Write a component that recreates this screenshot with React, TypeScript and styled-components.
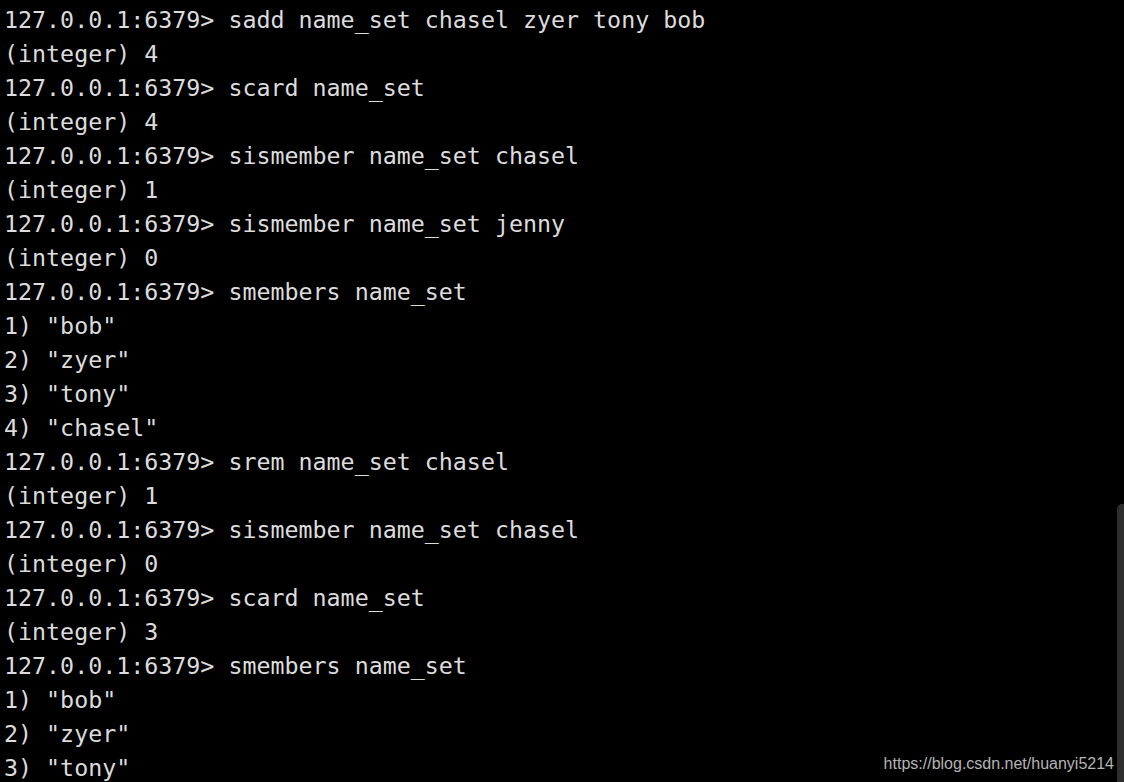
import React from "react";
import styled, { createGlobalStyle } from "styled-components";

const Global = createGlobalStyle`
  html, body { margin: 0; padding: 0; background: #000; }
  body { overflow: hidden; }
`;

const Screen = styled.div`
  position: relative;
  width: 1124px;
  height: 782px;
  background: #000;
  overflow: hidden;
`;

const Output = styled.pre`
  margin: 0;
  padding: 3px 0 0 4px;
  font-family: "DejaVu Sans Mono", "Liberation Mono", monospace;
  font-size: 23.3px;
  line-height: 34px;
  color: #dcdcdc;
  white-space: pre;
`;

const Line = styled.div`
  height: 34px;
`;

const Scrollbar = styled.div`
  position: absolute;
  right: 0;
  top: 504px;
  width: 7px;
  bottom: 0;
  background: #2e2e2e;
  border-top-left-radius: 5px;
`;

const Watermark = styled.div`
  position: absolute;
  right: 10px;
  bottom: 9px;
  font-family: "Liberation Sans", Arial, sans-serif;
  font-size: 16px;
  color: #b4b4b4;
`;

const P = "127.0.0.1:6379> ";

const lines = [
  P + "sadd name_set chasel zyer tony bob",
  "(integer) 4",
  P + "scard name_set",
  "(integer) 4",
  P + "sismember name_set chasel",
  "(integer) 1",
  P + "sismember name_set jenny",
  "(integer) 0",
  P + "smembers name_set",
  '1) "bob"',
  '2) "zyer"',
  '3) "tony"',
  '4) "chasel"',
  P + "srem name_set chasel",
  "(integer) 1",
  P + "sismember name_set chasel",
  "(integer) 0",
  P + "scard name_set",
  "(integer) 3",
  P + "smembers name_set",
  '1) "bob"',
  '2) "zyer"',
  '3) "tony"',
];

export default function App() {
  return (
    <Screen>
      <Global />
      <Output>
        {lines.map((l, i) => (
          <Line key={i}>{l}</Line>
        ))}
      </Output>
      <Scrollbar />
      <Watermark>https://blog.csdn.net/huanyi5214</Watermark>
    </Screen>
  );
}
